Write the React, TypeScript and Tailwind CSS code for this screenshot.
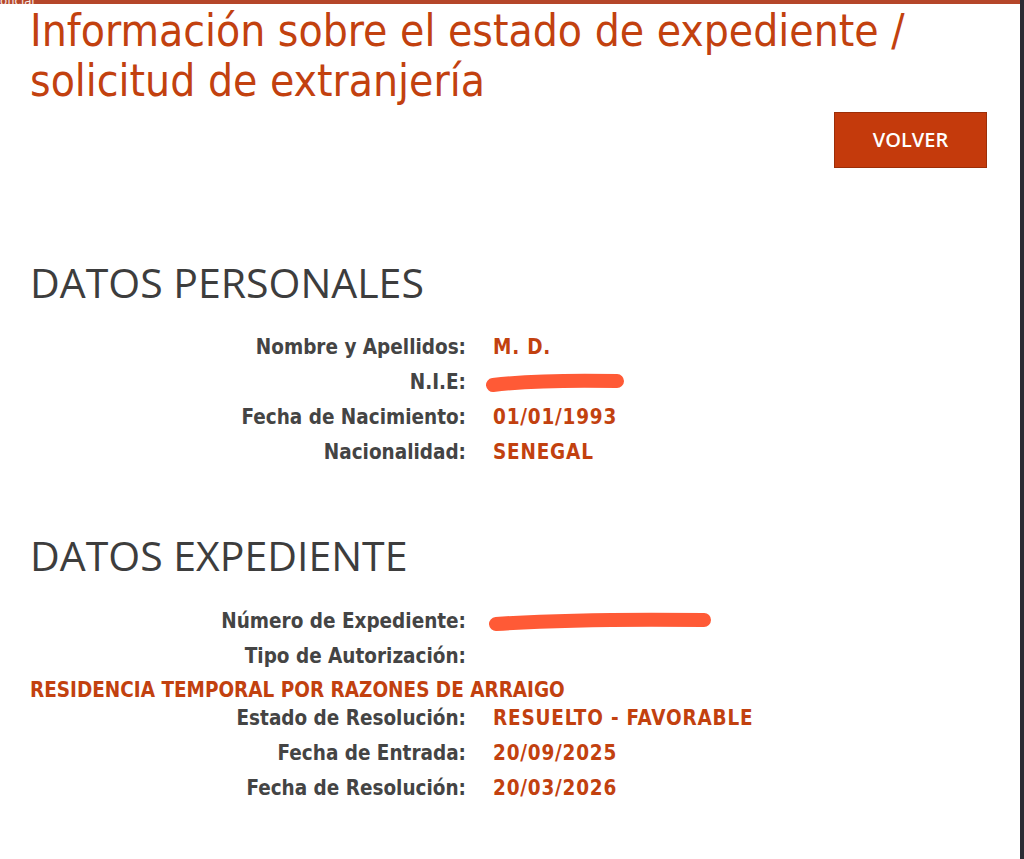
import React from "react";

const RUST = "text-[#c2410f]";

function Redaction({ width }: { width: number }) {
  return (
    <svg width={width} height="24" viewBox={`0 0 ${width} 24`} className="block">
      <path
        d={`M8 14 C ${width * 0.3} 10, ${width * 0.6} 9, ${width - 8} 10`}
        stroke="#ff5a36"
        strokeWidth="14"
        strokeLinecap="round"
        fill="none"
      />
    </svg>
  );
}

function Row({ label, children }: { label: string; children?: React.ReactNode }) {
  return (
    <div className="flex h-[35px] items-center">
      <div className="w-[436px] shrink-0 text-right font-bold text-[#444]">{label}</div>
      <div className={`ml-[27px] font-bold tracking-[0.8px] ${RUST}`}>{children}</div>
    </div>
  );
}

export default function App() {
  return (
    <div className="flex min-h-[859px] bg-white">
      <div className="relative flex-1">
        <div className="h-[4px] bg-[#b5462a]" />
        <span className="absolute left-0 top-[-9px] text-[13px] text-white/90 [font-family:'DejaVu_Sans_Condensed',sans-serif]">
          oficial
        </span>

        <div className="px-[30px]">
          <h1
            className={`mt-[2px] text-[44px] leading-[50px] ${RUST} [font-family:'DejaVu_Sans_Condensed',sans-serif]`}
          >
            Información sobre el estado de expediente /<br />
            solicitud de extranjería
          </h1>

          <div className="mt-[6px] flex justify-end pr-[3px]">
            <button className="h-[56px] w-[153px] border border-[#9c2e08] bg-[#c43a0c] text-[20px] font-semibold text-white [font-family:'Open_Sans',sans-serif]">
              VOLVER
            </button>
          </div>

          <h2 className="mt-[84px] text-[41px] leading-[60px] text-[#3d3d3d] [font-family:'Open_Sans',sans-serif]">
            DATOS PERSONALES
          </h2>

          <div className="mt-[18px] text-[20.5px] [font-family:'DejaVu_Sans_Condensed',sans-serif]">
            <Row label="Nombre y Apellidos:">M. D.</Row>
            <Row label="N.I.E:">
              <span className="-ml-[8px] block">
                <Redaction width={140} />
              </span>
            </Row>
            <Row label="Fecha de Nacimiento:">01/01/1993</Row>
            <Row label="Nacionalidad:">SENEGAL</Row>
          </div>

          <h2 className="mt-[55px] text-[41px] leading-[60px] text-[#3d3d3d] [font-family:'Open_Sans',sans-serif]">
            DATOS EXPEDIENTE
          </h2>

          <div className="mt-[19px] text-[20.5px] [font-family:'DejaVu_Sans_Condensed',sans-serif]">
            <Row label="Número de Expediente:">
              <span className="-ml-[5px] block">
                <Redaction width={224} />
              </span>
            </Row>
            <Row label="Tipo de Autorización:" />
            <div className={`h-[27px] pt-[6px] font-bold leading-[21px] ${RUST}`}>
              RESIDENCIA TEMPORAL POR RAZONES DE ARRAIGO
            </div>
            <Row label="Estado de Resolución:">RESUELTO - FAVORABLE</Row>
            <Row label="Fecha de Entrada:">20/09/2025</Row>
            <Row label="Fecha de Resolución:">20/03/2026</Row>
          </div>
        </div>
      </div>
      <div className="w-[4px] shrink-0 bg-[#2b2b33]" />
    </div>
  );
}
